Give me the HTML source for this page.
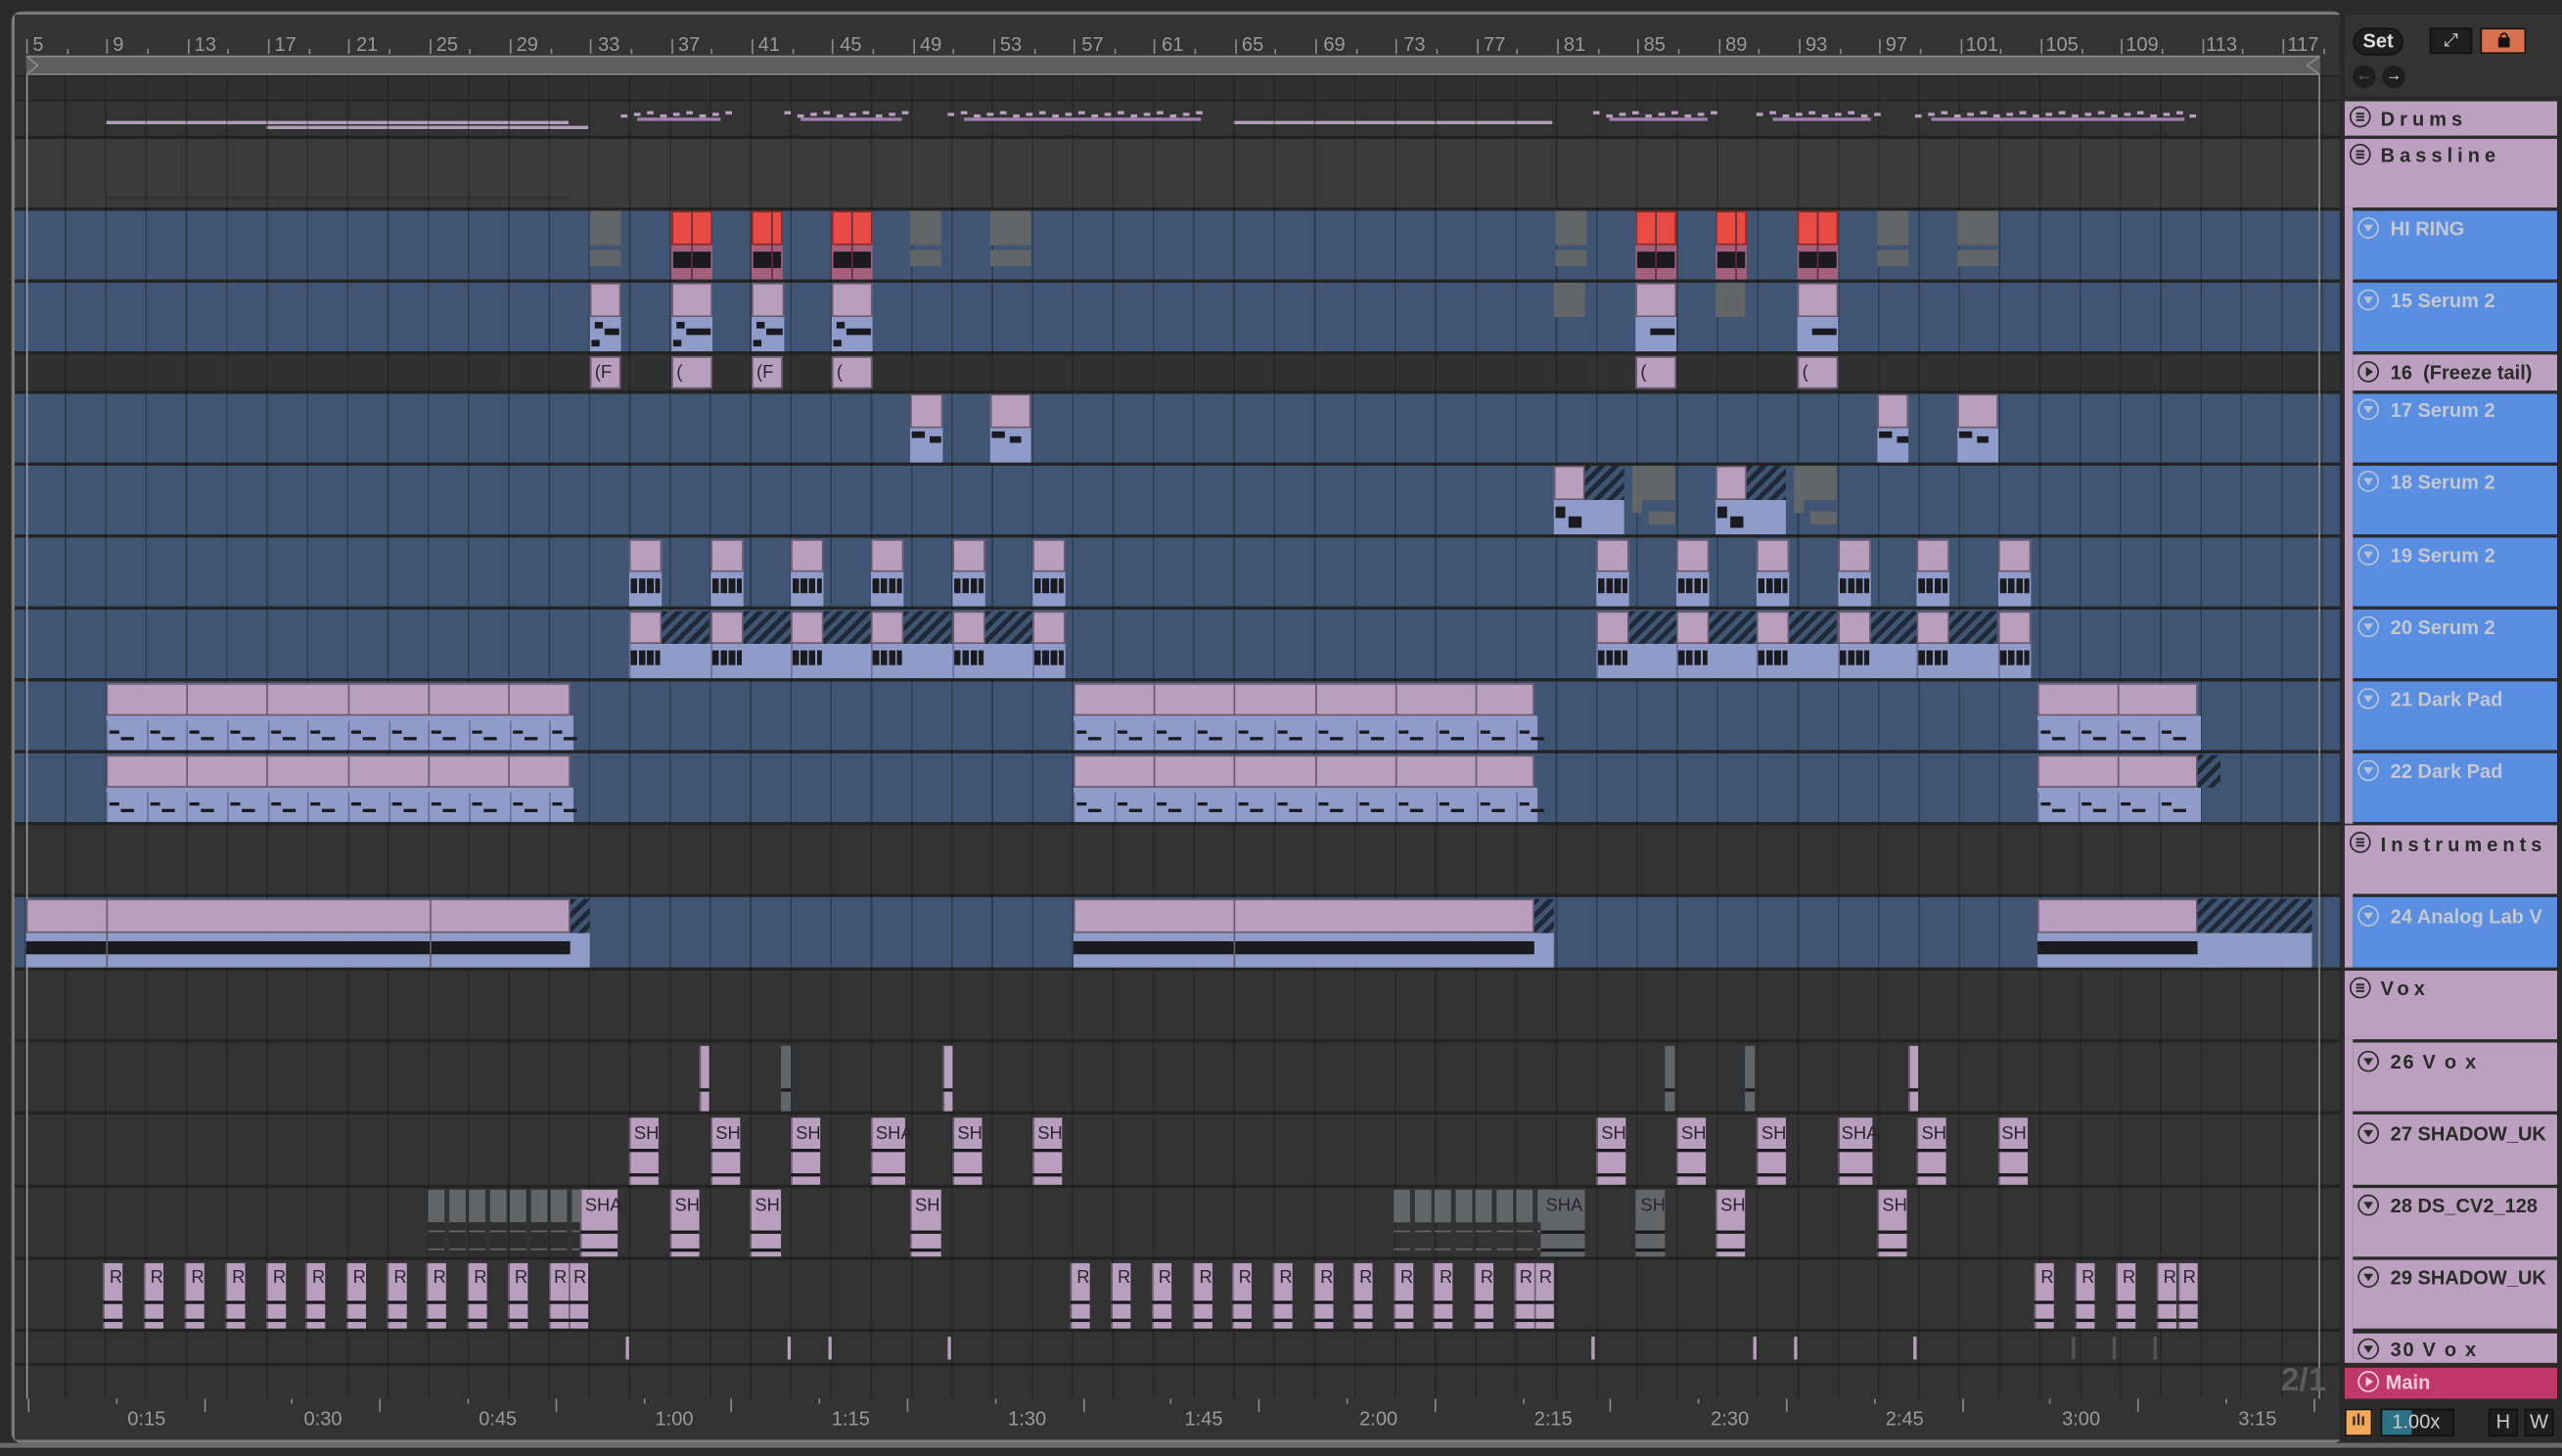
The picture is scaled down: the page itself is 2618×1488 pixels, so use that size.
<!DOCTYPE html>
<html><head><meta charset="utf-8"><style>
*{margin:0;padding:0;box-sizing:border-box}
html,body{width:2618px;height:1488px;overflow:hidden;background:#2a2a2a;font-family:"Liberation Sans",sans-serif}
#s{position:absolute;left:0;top:0;width:1568px;height:891px;transform:scale(1.66964,1.67003);transform-origin:0 0;background:#2a2a2a}
.k{position:absolute}
.h{background:#b89fbd;box-shadow:inset 0 0 0 1px #6a5a6e}
.l{background:#8f9cc9}
.r{background:#e84a44;box-shadow:inset 0 0 0 1px #8c2a2a}
.rb{background:#a35f7c}
.g{background:#636668}
.hx{background:repeating-linear-gradient(135deg,#1e2836 0 3px,#3f5573 3px 6px)}
.bk{background:repeating-linear-gradient(90deg,#1b1b1f 0 4px,#8f9cc9 4px 5px)}
.b{background:#1b1b1f}
.vp{background:#b89fbd;box-shadow:inset 1px 0 0 #6a5a6e}
.lab{position:absolute;font-size:11px;color:#2a2430;line-height:12px}
.rul{position:absolute;font-size:12px;color:#9a9a9a}
.tr{position:absolute;font-size:12px;color:#9a9a9a}
.ph{position:absolute;font-size:12px;font-weight:bold;line-height:14px}
.pg{color:#2a2a2a;letter-spacing:3px}
.pc{color:#c3c8d2}
.pd{color:#2a2a2a}
.ic{position:absolute;width:13px;height:13px;border:1.3px solid currentColor;border-radius:50%}
</style></head><body><div id="s">
<!-- outer frame -->
<div class="k" style="left:7px;top:7px;width:1427px;height:876px;border:2px solid #7a7a7a;border-radius:6px;background:#333"></div>
<div class="k" style="left:9px;top:9px;width:1423px;height:37px;background:#333"></div>
<!-- loop bar -->
<div class="k" style="left:16px;top:34px;width:1404px;height:12px;background:#5e5e5e;border-top:1px solid #8a8a8a;border-bottom:1px solid #8a8a8a"></div>
<svg class="k" style="left:16px;top:34px" width="8" height="12"><path d="M1 1 L7 6 L1 11" stroke="#8a8a8a" fill="none"/></svg>
<svg class="k" style="left:1410px;top:34px" width="10" height="12"><path d="M9 1 L2 6 L9 11" stroke="#8a8a8a" fill="none"/></svg>
<div id="rows"></div>
<div id="grid" class="k" style="left:9px;top:46px;width:1423px;height:810px;pointer-events:none;background:repeating-linear-gradient(90deg,transparent 0 6px,rgba(20,20,20,.35) 6px 7px,transparent 7px 24.66px)"></div>
<div id="clips"></div>
<!-- loop end & left lines -->
<div class="k" style="left:16px;top:46px;width:1px;height:812px;background:#9a9a9a"></div>
<div class="k" style="left:1419px;top:46px;width:1px;height:812px;background:#8a8a8a"></div>
<!-- ruler numbers -->
<div id="ruler"></div>
<span class="rul" style="left:20px;top:20px">5</span><span class="rul" style="left:69px;top:20px">9</span><span class="rul" style="left:119px;top:20px">13</span><span class="rul" style="left:168px;top:20px">17</span><span class="rul" style="left:218px;top:20px">21</span><span class="rul" style="left:267px;top:20px">25</span><span class="rul" style="left:316px;top:20px">29</span><span class="rul" style="left:366px;top:20px">33</span><span class="rul" style="left:415px;top:20px">37</span><span class="rul" style="left:464px;top:20px">41</span><span class="rul" style="left:514px;top:20px">45</span><span class="rul" style="left:563px;top:20px">49</span><span class="rul" style="left:612px;top:20px">53</span><span class="rul" style="left:662px;top:20px">57</span><span class="rul" style="left:711px;top:20px">61</span><span class="rul" style="left:760px;top:20px">65</span><span class="rul" style="left:810px;top:20px">69</span><span class="rul" style="left:859px;top:20px">73</span><span class="rul" style="left:908px;top:20px">77</span><span class="rul" style="left:957px;top:20px">81</span><span class="rul" style="left:1006px;top:20px">85</span><span class="rul" style="left:1056px;top:20px">89</span><span class="rul" style="left:1105px;top:20px">93</span><span class="rul" style="left:1154px;top:20px">97</span><span class="rul" style="left:1203px;top:20px">101</span><span class="rul" style="left:1252px;top:20px">105</span><span class="rul" style="left:1301px;top:20px">109</span><span class="rul" style="left:1350px;top:20px">113</span><span class="rul" style="left:1400px;top:20px">117</span>
<!-- time ruler -->
<div class="k" style="left:9px;top:856px;width:1423px;height:25px;background:#333"></div>
<span class="tr" style="left:78px;top:861px">0:15</span><span class="tr" style="left:186px;top:861px">0:30</span><span class="tr" style="left:293px;top:861px">0:45</span><span class="tr" style="left:401px;top:861px">1:00</span><span class="tr" style="left:509px;top:861px">1:15</span><span class="tr" style="left:617px;top:861px">1:30</span><span class="tr" style="left:725px;top:861px">1:45</span><span class="tr" style="left:832px;top:861px">2:00</span><span class="tr" style="left:939px;top:861px">2:15</span><span class="tr" style="left:1047px;top:861px">2:30</span><span class="tr" style="left:1154px;top:861px">2:45</span><span class="tr" style="left:1262px;top:861px">3:00</span><span class="tr" style="left:1370px;top:861px">3:15</span>
<span class="k" style="left:1396px;top:834px;font-size:20px;font-weight:bold;color:#5c5c5c">2/1</span>
<!-- clip labels -->
<div id="labels"></div>
<!-- right panel -->
<div class="k" style="left:1432px;top:0;width:136px;height:891px;background:#2a2a2a"></div>
<div class="k" style="left:1435px;top:9px;width:133px;height:50px;background:#333"></div>
<div class="k" style="left:1440px;top:17px;width:31px;height:17px;border-radius:9px;background:#1e1e1e;border:1px solid #111;color:#ddd;font-size:12px;font-weight:bold;text-align:center;line-height:15px">Set</div>
<div class="k" style="left:1487px;top:17px;width:26px;height:16px;background:#1e1e1e;border:1px solid #111;color:#ddd;font-size:11px;text-align:center;line-height:14px">⤢</div>
<div class="k" style="left:1518px;top:17px;width:28px;height:16px;background:#d9714e;border:1px solid #111"><div class="k" style="left:10px;top:5px;width:7px;height:6px;background:#111"></div><div class="k" style="left:11px;top:2px;width:5px;height:5px;border:1.3px solid #111;border-radius:3px 3px 0 0"></div></div>
<div class="k" style="left:1440px;top:40px;width:14px;height:14px;border-radius:50%;background:#1e1e1e;color:#666;font-size:10px;text-align:center;line-height:14px">←</div>
<div class="k" style="left:1458px;top:40px;width:14px;height:14px;border-radius:50%;background:#1e1e1e;color:#ddd;font-size:10px;text-align:center;line-height:14px">→</div>
<div id="panel"></div>
<!-- headers -->
<div class="ph pg" style="left:1457px;top:66px">Drums</div>
<div class="ph pg" style="left:1457px;top:88px">Bassline</div>
<div class="ph pc" style="left:1463px;top:133px">HI RING</div>
<div class="ph pc" style="left:1463px;top:177px">15 Serum 2</div>
<div class="ph pd" style="left:1463px;top:221px">16 &nbsp;(Freeze tail)</div>
<div class="ph pc" style="left:1463px;top:244px">17 Serum 2</div>
<div class="ph pc" style="left:1463px;top:288px">18 Serum 2</div>
<div class="ph pc" style="left:1463px;top:333px">19 Serum 2</div>
<div class="ph pc" style="left:1463px;top:377px">20 Serum 2</div>
<div class="ph pc" style="left:1463px;top:421px">21 Dark Pad</div>
<div class="ph pc" style="left:1463px;top:465px">22 Dark Pad</div>
<div class="ph pg" style="left:1457px;top:510px">Instruments</div>
<div class="ph pc" style="left:1463px;top:554px">24 Analog Lab V</div>
<div class="ph pg" style="left:1457px;top:598px">Vox</div>
<div class="ph pd" style="left:1463px;top:643px;letter-spacing:1px">26 V o x</div>
<div class="ph pd" style="left:1463px;top:687px">27 SHADOW_UK</div>
<div class="ph pd" style="left:1463px;top:731px">28 DS_CV2_128</div>
<div class="ph pd" style="left:1463px;top:775px">29 SHADOW_UK</div>
<div class="ph pd" style="left:1463px;top:819px;letter-spacing:1px">30 V o x</div>
<div class="ph" style="left:1460px;top:839px;color:#f0d0dc">Main</div>
<!-- bottom bar -->
<div class="k" style="left:1435px;top:862px;width:17px;height:17px;background:#f0a85a;border:1px solid #111;color:#2a2a2a;font-size:10px;text-align:center;line-height:14px;font-weight:bold">ılı</div>
<div class="k" style="left:1457px;top:862px;width:45px;height:17px;background:#1e1e1e;border:1px solid #111"><div class="k" style="left:0;top:0;width:18px;height:15px;background:#2e7288"></div><span class="k" style="left:6px;top:0;font-size:12px;color:#ccc;line-height:15px">1.00x</span></div>
<div class="k" style="left:1523px;top:862px;width:18px;height:17px;background:#1e1e1e;border:1px solid #111;color:#ccc;font-size:12px;text-align:center;line-height:15px">H</div>
<div class="k" style="left:1545px;top:862px;width:18px;height:17px;background:#1e1e1e;border:1px solid #111;color:#ccc;font-size:12px;text-align:center;line-height:15px">W</div>
<div class="k" style="left:0;top:883px;width:1568px;height:3px;background:#6a6a6a"></div>

<span class="lab" style="left:364px;top:222px">(F</span><span class="lab" style="left:414px;top:222px">(</span><span class="lab" style="left:463px;top:222px">(F</span><span class="lab" style="left:512px;top:222px">(</span><span class="lab" style="left:1004px;top:222px">(</span><span class="lab" style="left:1103px;top:222px">(</span>
<span class="lab" style="left:388px;top:688px">SH</span><span class="lab" style="left:438px;top:688px">SH</span><span class="lab" style="left:487px;top:688px">SH</span><span class="lab" style="left:536px;top:688px">SHA</span><span class="lab" style="left:586px;top:688px">SH</span><span class="lab" style="left:635px;top:688px">SH</span><span class="lab" style="left:980px;top:688px">SH</span><span class="lab" style="left:1029px;top:688px">SH</span><span class="lab" style="left:1078px;top:688px">SH</span><span class="lab" style="left:1127px;top:688px">SHA</span><span class="lab" style="left:1176px;top:688px">SH</span><span class="lab" style="left:1225px;top:688px">SH</span>
<span class="lab" style="left:358px;top:732px">SHA</span><span class="lab" style="left:413px;top:732px">SH</span><span class="lab" style="left:462px;top:732px">SH</span><span class="lab" style="left:560px;top:732px">SH</span><span class="lab" style="left:946px;top:732px">SHA</span><span class="lab" style="left:1004px;top:732px">SH</span><span class="lab" style="left:1053px;top:732px">SH</span><span class="lab" style="left:1152px;top:732px">SH</span>
<span class="lab" style="left:67px;top:776px">R</span><span class="lab" style="left:92px;top:776px">R</span><span class="lab" style="left:117px;top:776px">R</span><span class="lab" style="left:142px;top:776px">R</span><span class="lab" style="left:167px;top:776px">R</span><span class="lab" style="left:191px;top:776px">R</span><span class="lab" style="left:216px;top:776px">R</span><span class="lab" style="left:241px;top:776px">R</span><span class="lab" style="left:265px;top:776px">R</span><span class="lab" style="left:290px;top:776px">R</span><span class="lab" style="left:315px;top:776px">R</span><span class="lab" style="left:339px;top:776px">R</span><span class="lab" style="left:351px;top:776px">R</span>
<span class="lab" style="left:659px;top:776px">R</span><span class="lab" style="left:684px;top:776px">R</span><span class="lab" style="left:709px;top:776px">R</span><span class="lab" style="left:734px;top:776px">R</span><span class="lab" style="left:758px;top:776px">R</span><span class="lab" style="left:783px;top:776px">R</span><span class="lab" style="left:808px;top:776px">R</span><span class="lab" style="left:832px;top:776px">R</span><span class="lab" style="left:857px;top:776px">R</span><span class="lab" style="left:881px;top:776px">R</span><span class="lab" style="left:906px;top:776px">R</span><span class="lab" style="left:930px;top:776px">R</span><span class="lab" style="left:942px;top:776px">R</span>
<span class="lab" style="left:1249px;top:776px">R</span><span class="lab" style="left:1274px;top:776px">R</span><span class="lab" style="left:1299px;top:776px">R</span><span class="lab" style="left:1324px;top:776px">R</span><span class="lab" style="left:1336px;top:776px">R</span>

<script>
var S=document.getElementById('s');
function B(x,y,w,h,c,st){var d=document.createElement('div');d.className='k '+(c||'');d.style.cssText+='left:'+x+'px;top:'+y+'px;width:'+w+'px;height:'+h+'px;'+(st||'');S.insertBefore(d,document.getElementById('grid'));return d}
function C(x,y,w,h,c,st){var d=document.createElement('div');d.className='k '+(c||'');d.style.cssText+='left:'+x+'px;top:'+y+'px;width:'+w+'px;height:'+h+'px;'+(st||'');S.insertBefore(d,document.getElementById('labels'));return d}
var BL='#3f5573';
var rows=[[47,14,'#303030'],[62,21,'#333'],[85,42,'#3b3b3b'],[129,42,BL],[173,42,BL],[217,22,'#313131'],[241,42,BL],[285,42,BL],[329,42,BL],[373,42,BL],[417,42,BL],[461,42,BL],[505,42,'#333'],[549,43,BL],[594,42,'#333'],[638,42,'#333'],[682,43,'#333'],[727,42,'#333'],[771,42,'#333'],[815,19,'#333'],[836,20,'#333']];
B(9,46,1423,810,'', 'background:#232323');
rows.forEach(function(r){B(9,r[0],1423,r[1],'','background:'+r[2])});
// ruler ticks
for(var i=0;i<58;i++){var x=16+i*24.66;C(x,i%2?30:24,1,i%2?3:9,'','background:#8a8a8a')}
for(var i=0;i<27;i++){C(17+i*53.8,856,1,i%2?3:8,'','background:#8a8a8a')}
// Drums lines
B(65,74,283,2,'h','box-shadow:none');B(163,77,197,2,'h','box-shadow:none');B(755,74,195,2,'h','box-shadow:none');
[[380,66],[480,77],[580,160],[975,75],[1075,75],[1172,170]].forEach(function(a){for(var x=a[0];x<a[0]+a[1];x+=8){C(x,68+(x%3),4,2,'','background:#b89fbd')}C(a[0]+10,72,a[1]-15,2,'','background:#a07fb0')});
// Bassline faint
B(65,120,283,2,'','background:#333');
// HI RING
[361,557,606,952,1149,1198].forEach(function(x){var w=(x==361||x==557||x==952||x==1149)?19:25;C(x,129,w,21,'g');C(x,153,w,10,'g')});
[[411,25],[460,19],[509,25],[1001,25],[1050,19],[1100,25]].forEach(function(a){C(a[0],129,a[1],21,'r');C(a[0],150,a[1],21,'rb');C(a[0]+1,154,a[1]-2,10,'b');C(a[0]+12,129,1,42,'','background:#6a2a3a')});
// 15 serum
[[361,19],[411,25],[460,20],[509,25]].forEach(function(a){C(a[0],173,a[1],21,'h');C(a[0],194,a[1],21,'l');C(a[0]+3,197,5,4,'b');C(a[0]+9,201,a[1]-10,4,'b');C(a[0]+1,208,5,4,'b')});
[[951,19],[1001,25],[1050,18],[1100,25]].forEach(function(a,i){if(i%2){C(a[0],173,a[1],21,'h');C(a[0],194,a[1],21,'l');C(a[0]+9,201,a[1]-10,4,'b')}else{C(a[0],173,a[1],21,'g')}});
// 16 freeze
[[361,19],[411,25],[460,19],[509,25],[1001,25],[1100,25]].forEach(function(a){C(a[0],218,a[1],20,'h')});
// 17
[[557,20],[606,25],[1149,19],[1198,25]].forEach(function(a){C(a[0],241,a[1],21,'h');C(a[0],262,a[1],21,'l');C(a[0]+1,264,8,4,'b');C(a[0]+12,267,7,4,'b')});
// 18
[[951,970],[1050,1069]].forEach(function(a){C(a[0],285,19,21,'h');C(a[0]+19,285,24,21,'hx');C(a[0],306,43,21,'l');C(a[0]+1,310,6,7,'b');C(a[0]+9,316,8,7,'b');C(a[0]+48,285,26,21,'g');C(a[0]+48,306,6,8,'g');C(a[0]+58,313,16,8,'g')});
// 19 & 20
var xs=[385,435,484,533,583,632,977,1026,1075,1125,1173,1223];
xs.forEach(function(x){C(x,330,20,20,'h');C(x,350,20,21,'l');C(x+1,354,18,9,'bk')});
C(385,394,267,21,'l');C(977,394,266,21,'l');
xs.forEach(function(x,i){C(x,374,20,20,'h');if(i%6!=5)C(x+20,374,29,20,'hx');C(x+1,398,18,9,'bk');C(x,394,1,21,'','background:#6a6f98')});
// pads
[[65,284],[657,282],[1247,98]].forEach(function(a){[417,461].forEach(function(y){C(a[0],y+1,a[1],20,'h');C(a[0],y+21,a[1]+2,21,'l');for(var x=a[0];x<a[0]+a[1];x+=24.66){C(x,y+24,1,18,'','background:#6a6f98');C(x+2,y+30,6,2,'b');C(x+9,y+34,8,2,'b')}for(var x=a[0]+49;x<a[0]+a[1];x+=49.3)C(x,y+1,1,20,'','background:#6a5a6e')})});
C(1345,462,14,20,'hx');
// 24
[[16,333],[657,282],[1247,98]].forEach(function(a){C(a[0],550,a[1],21,'h');C(a[0],571,a[1]+12,21,'l');C(a[0],576,a[1],8,'b');C(a[0]+a[1],550,12,21,'hx')});
C(65,550,1,42,'','background:#6a5a6e');C(263,550,1,42,'','background:#6a5a6e');C(755,550,1,42,'','background:#6a5a6e');
C(1345,550,70,21,'hx');C(1345,571,70,21,'l');
// vox 26
[428,478,577,1019,1068,1168].forEach(function(x,i){C(x,640,6,40,i%3==1||i>2&&i<5?'g':'vp');C(x,666,6,2,'b')});
// vox 27
xs.forEach(function(x,i){var w=(i==3||i==9)?21:18;C(x,684,w,41,'vp');C(x,703,w,2,'b');C(x,718,w,2,'b')});
// vox 28
for(var x=262;x<352;x+=12.5){C(x,728,10,20,'g');C(x,748,10,21,'','background:#2f2f2f');C(x,753,10,1,'','background:#666');C(x,764,10,1,'','background:#666')}
for(var x=853;x<943;x+=12.5){C(x,728,10,20,'g');C(x,753,10,1,'','background:#666');C(x,764,10,1,'','background:#666')}
[[355,23],[410,18],[459,19],[557,19],[943,27],[1001,18],[1050,18],[1149,18]].forEach(function(a,i){C(a[0],728,a[1],41,(i==4||i==5)?'g':'vp');C(a[0],753,a[1],2,'b');C(a[0],764,a[1],2,'b')});
// vox 29
var rx=[63,88,113,138,163,187,212,237,261,286,311,336,348,655,680,705,730,754,779,804,828,853,877,902,927,939,1245,1270,1295,1320,1333];
rx.forEach(function(x){C(x,773,12,40,'vp');C(x,796,12,2,'b');C(x,807,12,2,'b')});
// vox 30 marks
[383,482,507,580,974,1073,1098,1171].forEach(function(x){C(x,818,2,14,'','background:#b89fbd')});
[1268,1293,1318].forEach(function(x){C(x,818,2,14,'','background:#555')});
// right panel
function P(x,y,w,h,c){var d=document.createElement('div');d.className='k';d.style.cssText='left:'+x+'px;top:'+y+'px;width:'+w+'px;height:'+h+'px;background:'+c;S.insertBefore(d,document.querySelector('.ph'));return d}
var PK='#bba0bf',BU='#5a8ee0';
P(1435,62,130,21,PK);P(1435,85,130,42,PK);P(1435,127,5,377,PK);
[[129,BU],[173,BU],[217,PK],[241,BU],[285,BU],[329,BU],[373,BU],[417,BU],[461,BU]].forEach(function(a){P(1440,a[0],125,a[0]==217?22:42,a[1])});
P(1435,505,130,42,PK);P(1435,547,5,45,PK);P(1440,549,125,43,BU);
P(1435,594,130,42,PK);P(1435,636,5,198,PK);
[[638,42],[682,43],[727,42],[771,42],[816,18]].forEach(function(a){P(1440,a[0],125,a[1],PK)});
P(1435,837,130,19,'#c0386a');
// icons
function I(y,c,t){var d=document.createElement('div');d.className='k';d.style.cssText='left:'+(t==2?1438:1443)+'px;top:'+y+'px;width:13px;height:13px;border:1.3px solid '+c+';border-radius:50%';d.innerHTML=t==0?'<svg width="11" height="11" style="position:absolute;left:0;top:0"><path d="M2.5 3.5 L8.5 3.5 L5.5 8 Z" fill="'+c+'"/></svg>':t==1?'<svg width="11" height="11" style="position:absolute;left:0;top:0"><path d="M4 2.5 L8.5 5.5 L4 8.5 Z" fill="'+c+'"/></svg>':'<svg width="11" height="11" style="position:absolute;left:0;top:0"><path d="M3 3.5H8M3 5.5H8M3 7.5H8" stroke="'+c+'" stroke-width="1.2"/></svg>';S.appendChild(d)}
I(65,'#2a2a2a',2);I(88,'#2a2a2a',2);I(509,'#2a2a2a',2);I(598,'#2a2a2a',2);
[133,177,244,288,333,377,421,465,554].forEach(function(y){I(y,'#b7c3d6',0)});
I(221,'#2a2a2a',1);[643,687,731,775,819].forEach(function(y){I(y,'#2a2a2a',0)});
I(839,'#f0d0dc',1);
</script>
</div></body></html>
